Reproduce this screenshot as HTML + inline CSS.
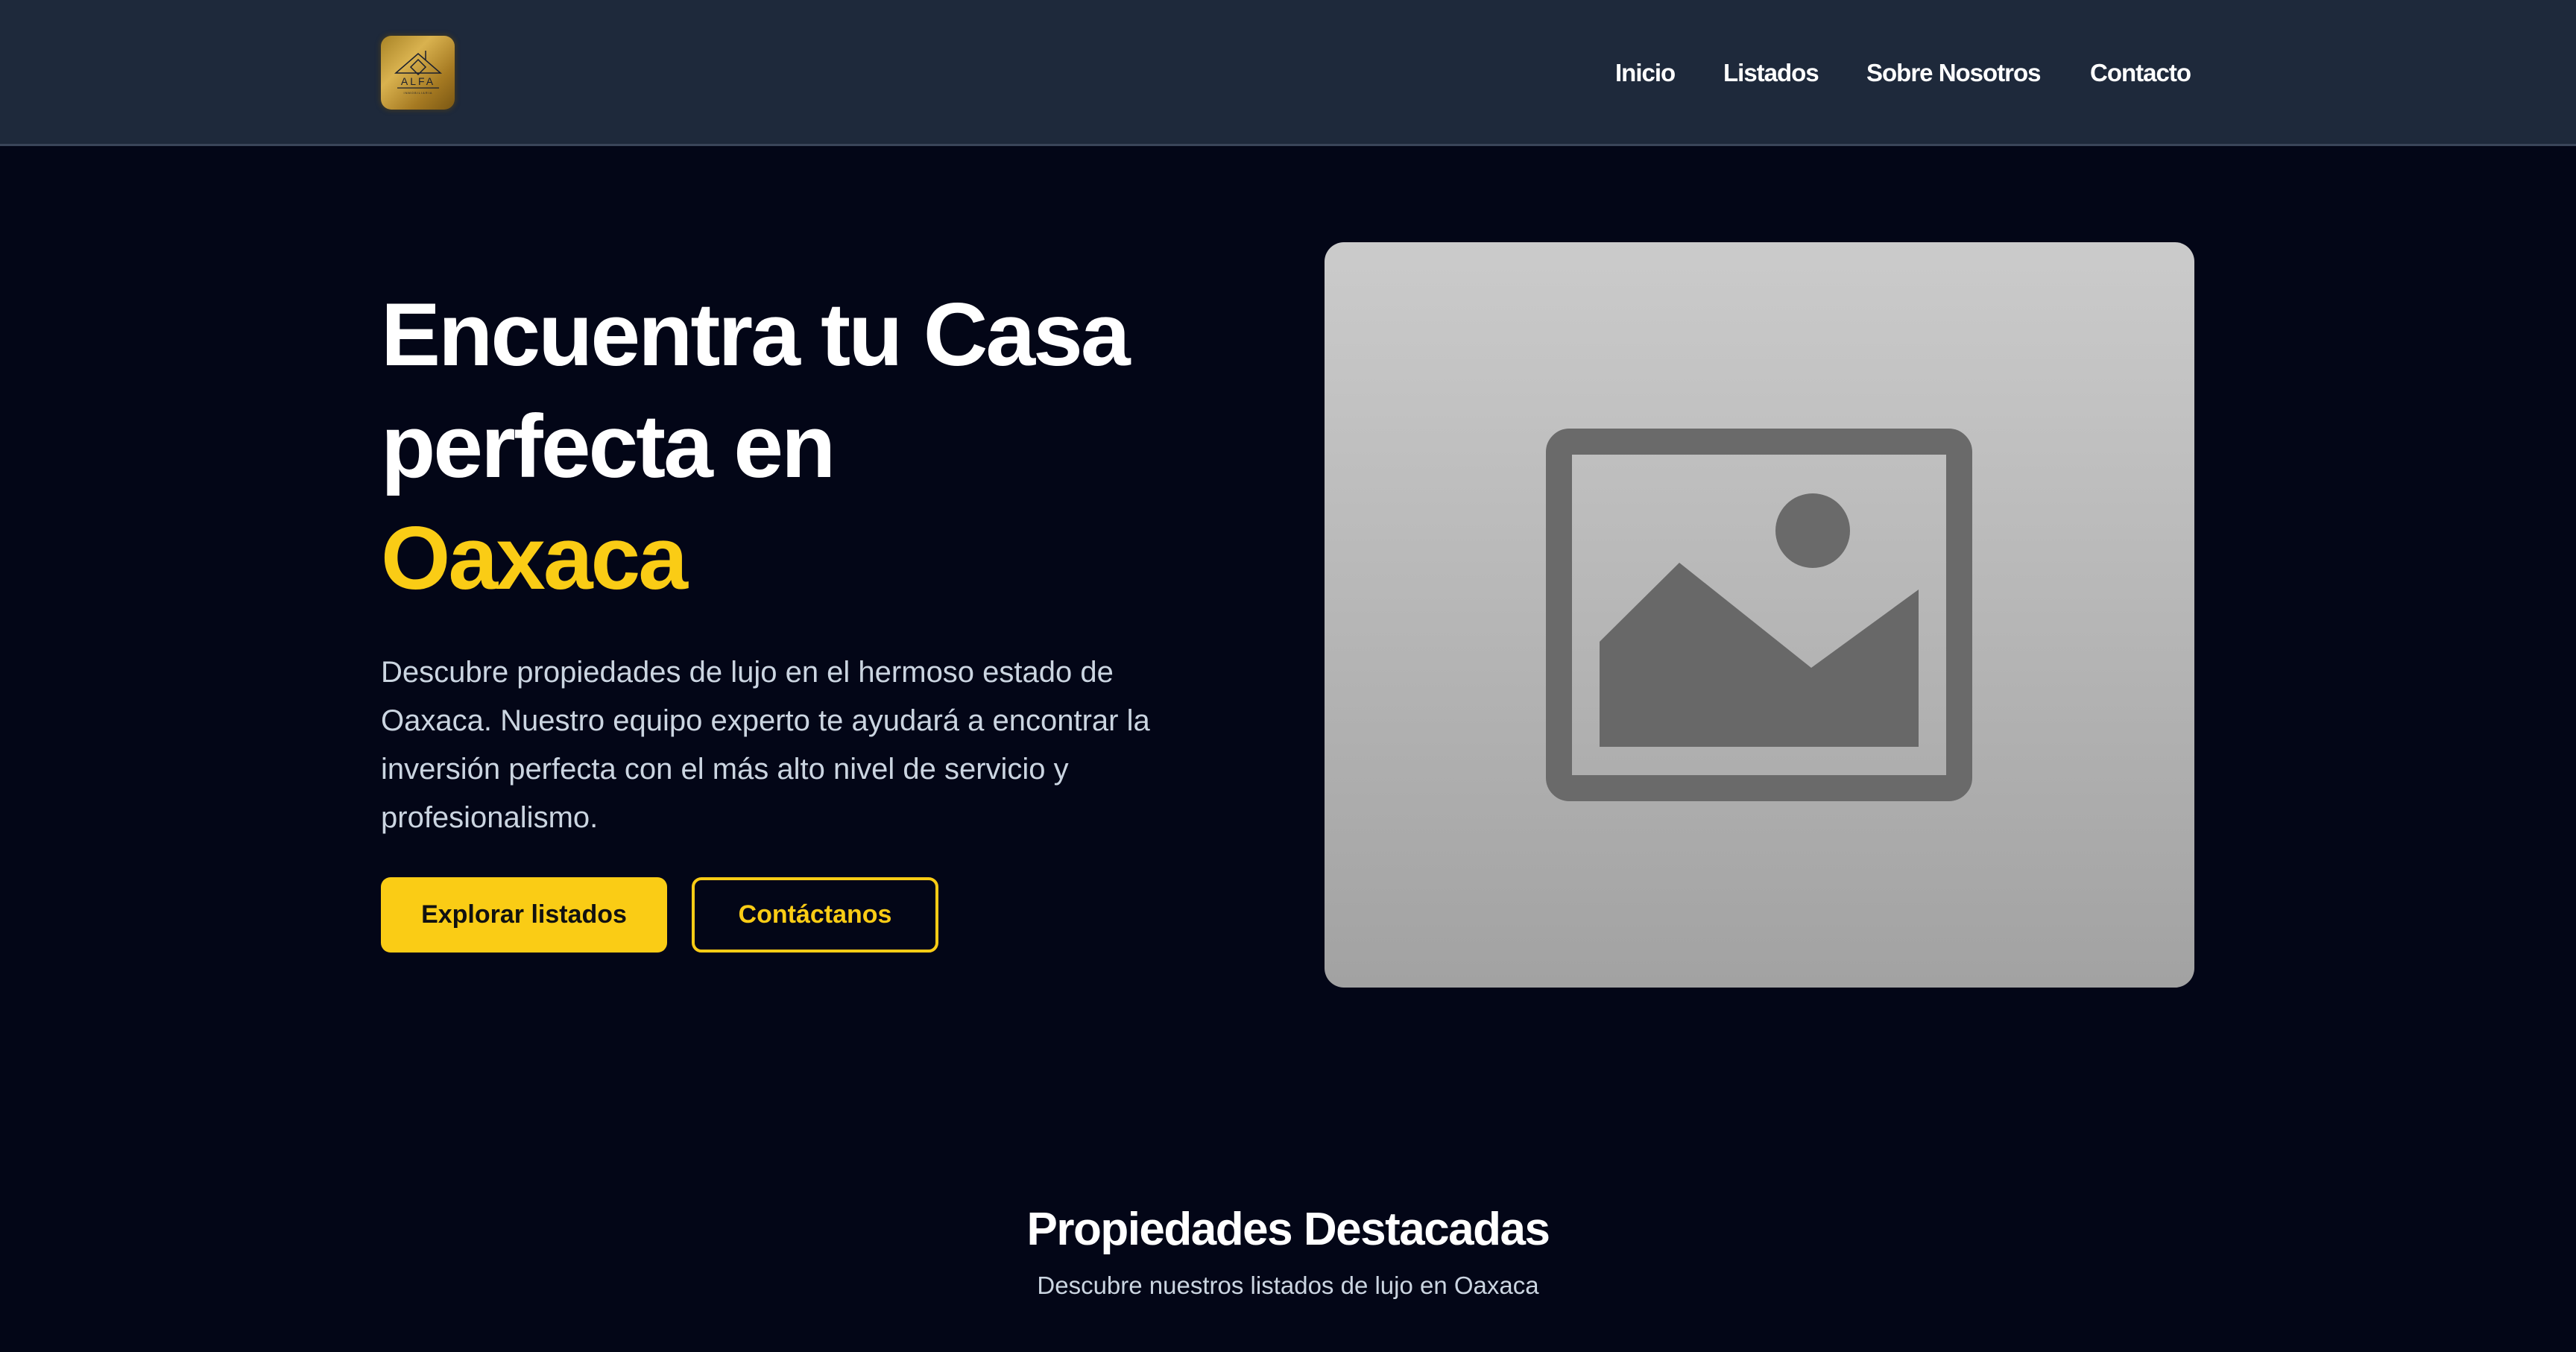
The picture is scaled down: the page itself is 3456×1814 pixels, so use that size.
<!DOCTYPE html>
<html><head><meta charset="utf-8"><style>
*{margin:0;padding:0;box-sizing:border-box}
html,body{width:3456px;height:1814px;overflow:hidden;background:#030617;font-family:"Liberation Sans",sans-serif}
.nav{position:absolute;left:0;top:0;width:3456px;height:196px;background:#1e293b;border-bottom:3px solid #3a4559}
.logo{position:absolute;left:511px;top:48px;width:99px;height:99px;border-radius:14px;background:linear-gradient(135deg,#a88326,#d9b24f 35%,#a67a22 70%,#7a5713);box-shadow:0 0 6px 2px rgba(90,70,20,.5)}
.links a{position:absolute;top:79px;color:#fff;font-size:33px;font-weight:bold;text-decoration:none;letter-spacing:-1px}
h1{position:absolute;left:511px;top:374px;font-size:120px;line-height:150px;color:#fff;font-weight:bold;letter-spacing:-3px}
h1 span{color:#facc15}
p.lead{position:absolute;left:511px;top:870px;width:1110px;font-size:40px;line-height:65px;color:#cbd5e1}
.btn{position:absolute;top:1177px;height:101px;border-radius:13px;font-size:34px;font-weight:bold;display:flex;align-items:center;justify-content:center}
.b1{left:511px;width:384px;background:#facc15;color:#111}
.b2{left:928px;width:331px;border:4px solid #facc15;color:#facc15}
.card{position:absolute;left:1777px;top:325px;width:1167px;height:1000px;border-radius:26px;background:linear-gradient(#cbcbcb,#a2a2a2);overflow:hidden}
h2{position:absolute;left:0;width:3456px;top:1614px;text-align:center;color:#fff;font-size:62px;font-weight:bold;letter-spacing:-1.5px}
.sub{position:absolute;left:0;width:3456px;top:1706px;text-align:center;color:#cbd5e1;font-size:33px}
</style></head><body>
<div class="nav">
<div class="logo"><svg width="99" height="99" viewBox="0 0 99 99"><g fill="none" stroke="#1a1f2e" stroke-width="1.5"><path d="M20 50 L50 24 L80 50 Z"/><path d="M50 32 L60 42 L50 52 L40 42 Z"/><line x1="60" y1="20" x2="60" y2="32"/></g><text x="50" y="66" text-anchor="middle" font-family="Liberation Sans" font-size="14" fill="#1a1f2e" letter-spacing="3">ALFA</text><line x1="22" y1="70" x2="78" y2="70" stroke="#1a1f2e" stroke-width="1.2"/><text x="50" y="78" text-anchor="middle" font-family="Liberation Sans" font-size="4" fill="#1a1f2e" letter-spacing="1">INMOBILIARIA</text></svg></div>
<div class="links"><a style="left:2167px">Inicio</a><a style="left:2312px">Listados</a><a style="left:2504px">Sobre Nosotros</a><a style="left:2804px">Contacto</a></div>
</div>
<h1>Encuentra tu Casa<br>perfecta en<br><span>Oaxaca</span></h1>
<p class="lead">Descubre propiedades de lujo en el hermoso estado de Oaxaca. Nuestro equipo experto te ayudará a encontrar la inversión perfecta con el más alto nivel de servicio y profesionalismo.</p>
<div class="btn b1">Explorar listados</div>
<div class="btn b2">Contáctanos</div>
<div class="card"><svg width="1167" height="1000" viewBox="1777 325 1167 1000"><rect x="2091.5" y="592.5" width="537" height="465" rx="14" fill="none" stroke="#6a6a6a" stroke-width="35"/><circle cx="2432" cy="712" r="50" fill="#6a6a6a"/><polygon points="2146,861 2253,755 2430,896 2574,791 2574,1002 2146,1002" fill="#686868"/></svg></div>
<h2>Propiedades Destacadas</h2>
<div class="sub">Descubre nuestros listados de lujo en Oaxaca</div>
</body></html>
